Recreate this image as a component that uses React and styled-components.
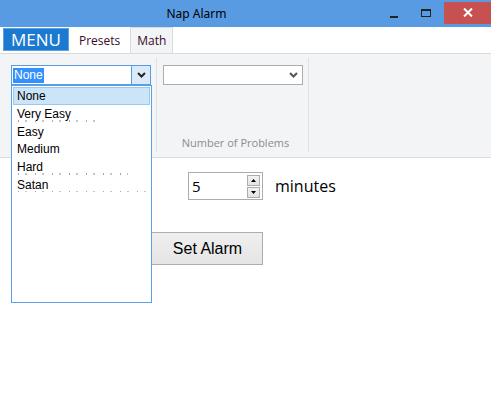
import React from 'react'
import styled, { createGlobalStyle } from 'styled-components'

const Global = createGlobalStyle`
  html, body { margin: 0; padding: 0; background: #fff; }
  body { font-family: "Liberation Sans", Arial, sans-serif; }
`

const Window = styled.div`
  position: relative;
  width: 491px;
  height: 412px;
  background: #fff;
  overflow: hidden;
  display: flex;
  flex-direction: column;
`

const TitleBar = styled.div`
  height: 27px;
  background: #599be2;
  display: flex;
  align-items: center;
  position: relative;
`

const Title = styled.div`
  flex: 1;
  text-align: center;
  font-family: "Noto Sans", "Open Sans", sans-serif;
  font-size: 12px;
  color: #000;
  padding-left: 12px;
`

const WinButton = styled.div`
  width: ${p => p.w || 28}px;
  height: 22px;
  margin-top: -2px;
  display: flex;
  align-items: center;
  justify-content: center;
  background: ${p => p.bg || 'transparent'};
`

const TabRow = styled.div`
  height: 26px;
  display: flex;
  align-items: stretch;
  padding-left: 3px;
  padding-top: 1px;
  box-sizing: border-box;
`

const MenuTab = styled.div`
  width: 66px;
  height: 23px;
  background: #1b79d0;
  color: #fff;
  font-family: "Open Sans", "Noto Sans", sans-serif;
  font-size: 17px;
  display: flex;
  align-items: center;
  justify-content: center;
  border: 1px solid #5aa0e4;
  box-sizing: border-box;
`

const Tab = styled.div`
  padding: 0 ${p => p.px || 8}px;
  font-family: "Open Sans", "Noto Sans", sans-serif;
  font-size: 12px;
  color: #3a0a2a;
  display: flex;
  align-items: center;
  background: ${p => (p.active ? '#f3f4f6' : '#fff')};
  border: 1px solid ${p => (p.active ? '#dadbdc' : 'transparent')};
  border-bottom: none;
  margin-top: -1px;
`

const Ribbon = styled.div`
  height: 105px;
  background: #f3f4f6;
  border-top: 1px solid #dadbdc;
  border-bottom: 1px solid #dadbdc;
  box-sizing: border-box;
  display: flex;
`

const Group = styled.div`
  width: ${p => p.w}px;
  border-right: 1px solid #e0e1e3;
  margin: 4px 0 5px;
  display: flex;
  flex-direction: column;
  align-items: flex-start;
  padding: 7px 0 0 ${p => p.pl || 6}px;
  box-sizing: border-box;
`

const GroupLabel = styled.div`
  margin-top: auto;
  align-self: center;
  font-family: "Open Sans", "Noto Sans", sans-serif;
  font-size: 11px;
  color: #8c8c8c;
  padding-bottom: 2px;
`

const Combo = styled.div`
  width: 140px;
  height: 20px;
  box-sizing: border-box;
  background: #fff;
  border: 1px solid ${p => (p.open ? '#569de5' : '#acacac')};
  display: flex;
  align-items: center;
  position: relative;
`

const ComboText = styled.span`
  margin-left: 1px;
  padding: 0 1px;
  background: #3390ff;
  color: #fff;
  font-size: 12px;
  line-height: 15px;
`

const ComboArrow = styled.div`
  margin-left: auto;
  width: 18px;
  height: 100%;
  display: flex;
  align-items: center;
  justify-content: center;
  background: ${p => (p.open ? '#dbeaf9' : 'transparent')};
  border-left: 1px solid ${p => (p.open ? '#569de5' : 'transparent')};
`

const ListBox = styled.div`
  position: absolute;
  left: 11px;
  top: 85px;
  width: 141px;
  height: 218px;
  box-sizing: border-box;
  background: #fff;
  border: 1px solid #5aa0e4;
  padding-top: 1px;
  z-index: 5;
`

const Item = styled.div`
  height: ${p => p.h || 17.6}px;
  margin: 0 1px;
  padding-left: 3px;
  font-size: 12px;
  line-height: 16px;
  color: #000;
  background: ${p => (p.sel ? '#cce4f7' : 'transparent')};
  border: 1px solid ${p => (p.sel ? '#99c9ef' : 'transparent')};
  box-sizing: border-box;
  position: relative;
  overflow: hidden;
`

/* the cut-off description line under some items: only its top pixels show */
const Ghost = styled.div`
  position: absolute;
  left: 4px;
  top: 14px;
  width: ${p => p.w}px;
  height: 2px;
  background: repeating-linear-gradient(90deg, #a8a8a8 0 1px, transparent 1px 7px, #c4c4c4 7px 9px, transparent 9px 17px);
`

const Content = styled.div`
  flex: 1;
  display: flex;
  flex-direction: column;
  align-items: flex-start;
  padding: 14px 0 0 150px;
`

const SpinRow = styled.div`
  display: flex;
  align-items: center;
  margin-left: 38px;
`

const SpinBox = styled.div`
  width: 75px;
  height: 28px;
  box-sizing: border-box;
  border: 1px solid #acacac;
  background: #fff;
  display: flex;
  align-items: center;
  padding: 0 2px 0 3px;
`

const SpinValue = styled.span`
  flex: 1;
  font-family: "Open Sans", "Noto Sans", sans-serif;
  font-size: 15px;
  color: #000;
`

const SpinBtns = styled.div`
  display: flex;
  flex-direction: column;
  gap: 1px;
`

const SpinBtn = styled.div`
  width: 13px;
  height: 11px;
  box-sizing: border-box;
  border: 1px solid #acacac;
  background: linear-gradient(#f2f2f2, #e3e3e3);
  display: flex;
  align-items: center;
  justify-content: center;
`

const Unit = styled.span`
  margin-left: 12px;
  font-family: "Open Sans", "Noto Sans", sans-serif;
  font-size: 16px;
  color: #000;
`

const Button = styled.div`
  margin-top: 32px;
  width: 113px;
  height: 33px;
  box-sizing: border-box;
  border: 1px solid #adadad;
  background: linear-gradient(#efefef, #e5e5e5);
  display: flex;
  align-items: center;
  justify-content: center;
  padding-left: 2px;
  font-family: "Liberation Sans", Arial, sans-serif;
  font-size: 16px;
  color: #000;
`

const Chevron = ({ color = '#222' }) => (
  <svg width="9" height="6" viewBox="0 0 9 6">
    <path d="M1 1 L4.5 4.5 L8 1" fill="none" stroke={color} strokeWidth="2" />
  </svg>
)

const Tri = ({ up }) => (
  <svg width="5" height="3" viewBox="0 0 5 3">
    <path d={up ? 'M0 3 L2.5 0 L5 3 Z' : 'M0 0 L2.5 3 L5 0 Z'} fill="#000" />
  </svg>
)

const items = [
  { name: 'None', sel: true },
  { name: 'Very Easy', ghost: 85 },
  { name: 'Easy' },
  { name: 'Medium' },
  { name: 'Hard', ghost: 110 },
  { name: 'Satan', ghost: 128 },
]

const App = () => (
  <Window>
    <Global />
    <TitleBar>
      <Title>Nap Alarm</Title>
      <WinButton w={27}>
        <svg width="9" height="3" viewBox="0 0 9 3" style={{ marginTop: 8 }}>
          <rect width="8" height="2" y="1" fill="#222" />
        </svg>
      </WinButton>
      <WinButton w={36}>
        <svg width="10" height="8" viewBox="0 0 10 8">
          <rect x="0.5" y="0.5" width="9" height="7" fill="none" stroke="#222" />
          <rect x="0" y="0" width="10" height="2" fill="#222" />
        </svg>
      </WinButton>
      <WinButton w={47} bg="#c75050">
        <svg width="10" height="9" viewBox="0 0 10 9">
          <path d="M1 0.5 L9 8.5 M9 0.5 L1 8.5" stroke="#fff" strokeWidth="2" />
        </svg>
      </WinButton>
    </TitleBar>
    <TabRow>
      <MenuTab>MENU</MenuTab>
      <Tab px={9}>Presets</Tab>
      <Tab active px={6}>Math</Tab>
    </TabRow>
    <Ribbon>
      <Group w={157} pl={11}>
        <Combo open>
          <ComboText>None</ComboText>
          <ComboArrow open><Chevron /></ComboArrow>
        </Combo>
      </Group>
      <Group w={152} pl={6}>
        <Combo>
          <ComboArrow><Chevron color="#555" /></ComboArrow>
        </Combo>
        <GroupLabel>Number of Problems</GroupLabel>
      </Group>
    </Ribbon>
    <Content>
      <SpinRow>
        <SpinBox>
          <SpinValue>5</SpinValue>
          <SpinBtns>
            <SpinBtn><Tri up /></SpinBtn>
            <SpinBtn><Tri /></SpinBtn>
          </SpinBtns>
        </SpinBox>
        <Unit>minutes</Unit>
      </SpinRow>
      <Button>Set Alarm</Button>
    </Content>
    <ListBox>
      {items.map(it => (
        <Item key={it.name} sel={it.sel} h={it.sel ? 18 : 17.7}>
          {it.name}
          {it.ghost && <Ghost w={it.ghost} />}
        </Item>
      ))}
    </ListBox>
  </Window>
)

export default App
